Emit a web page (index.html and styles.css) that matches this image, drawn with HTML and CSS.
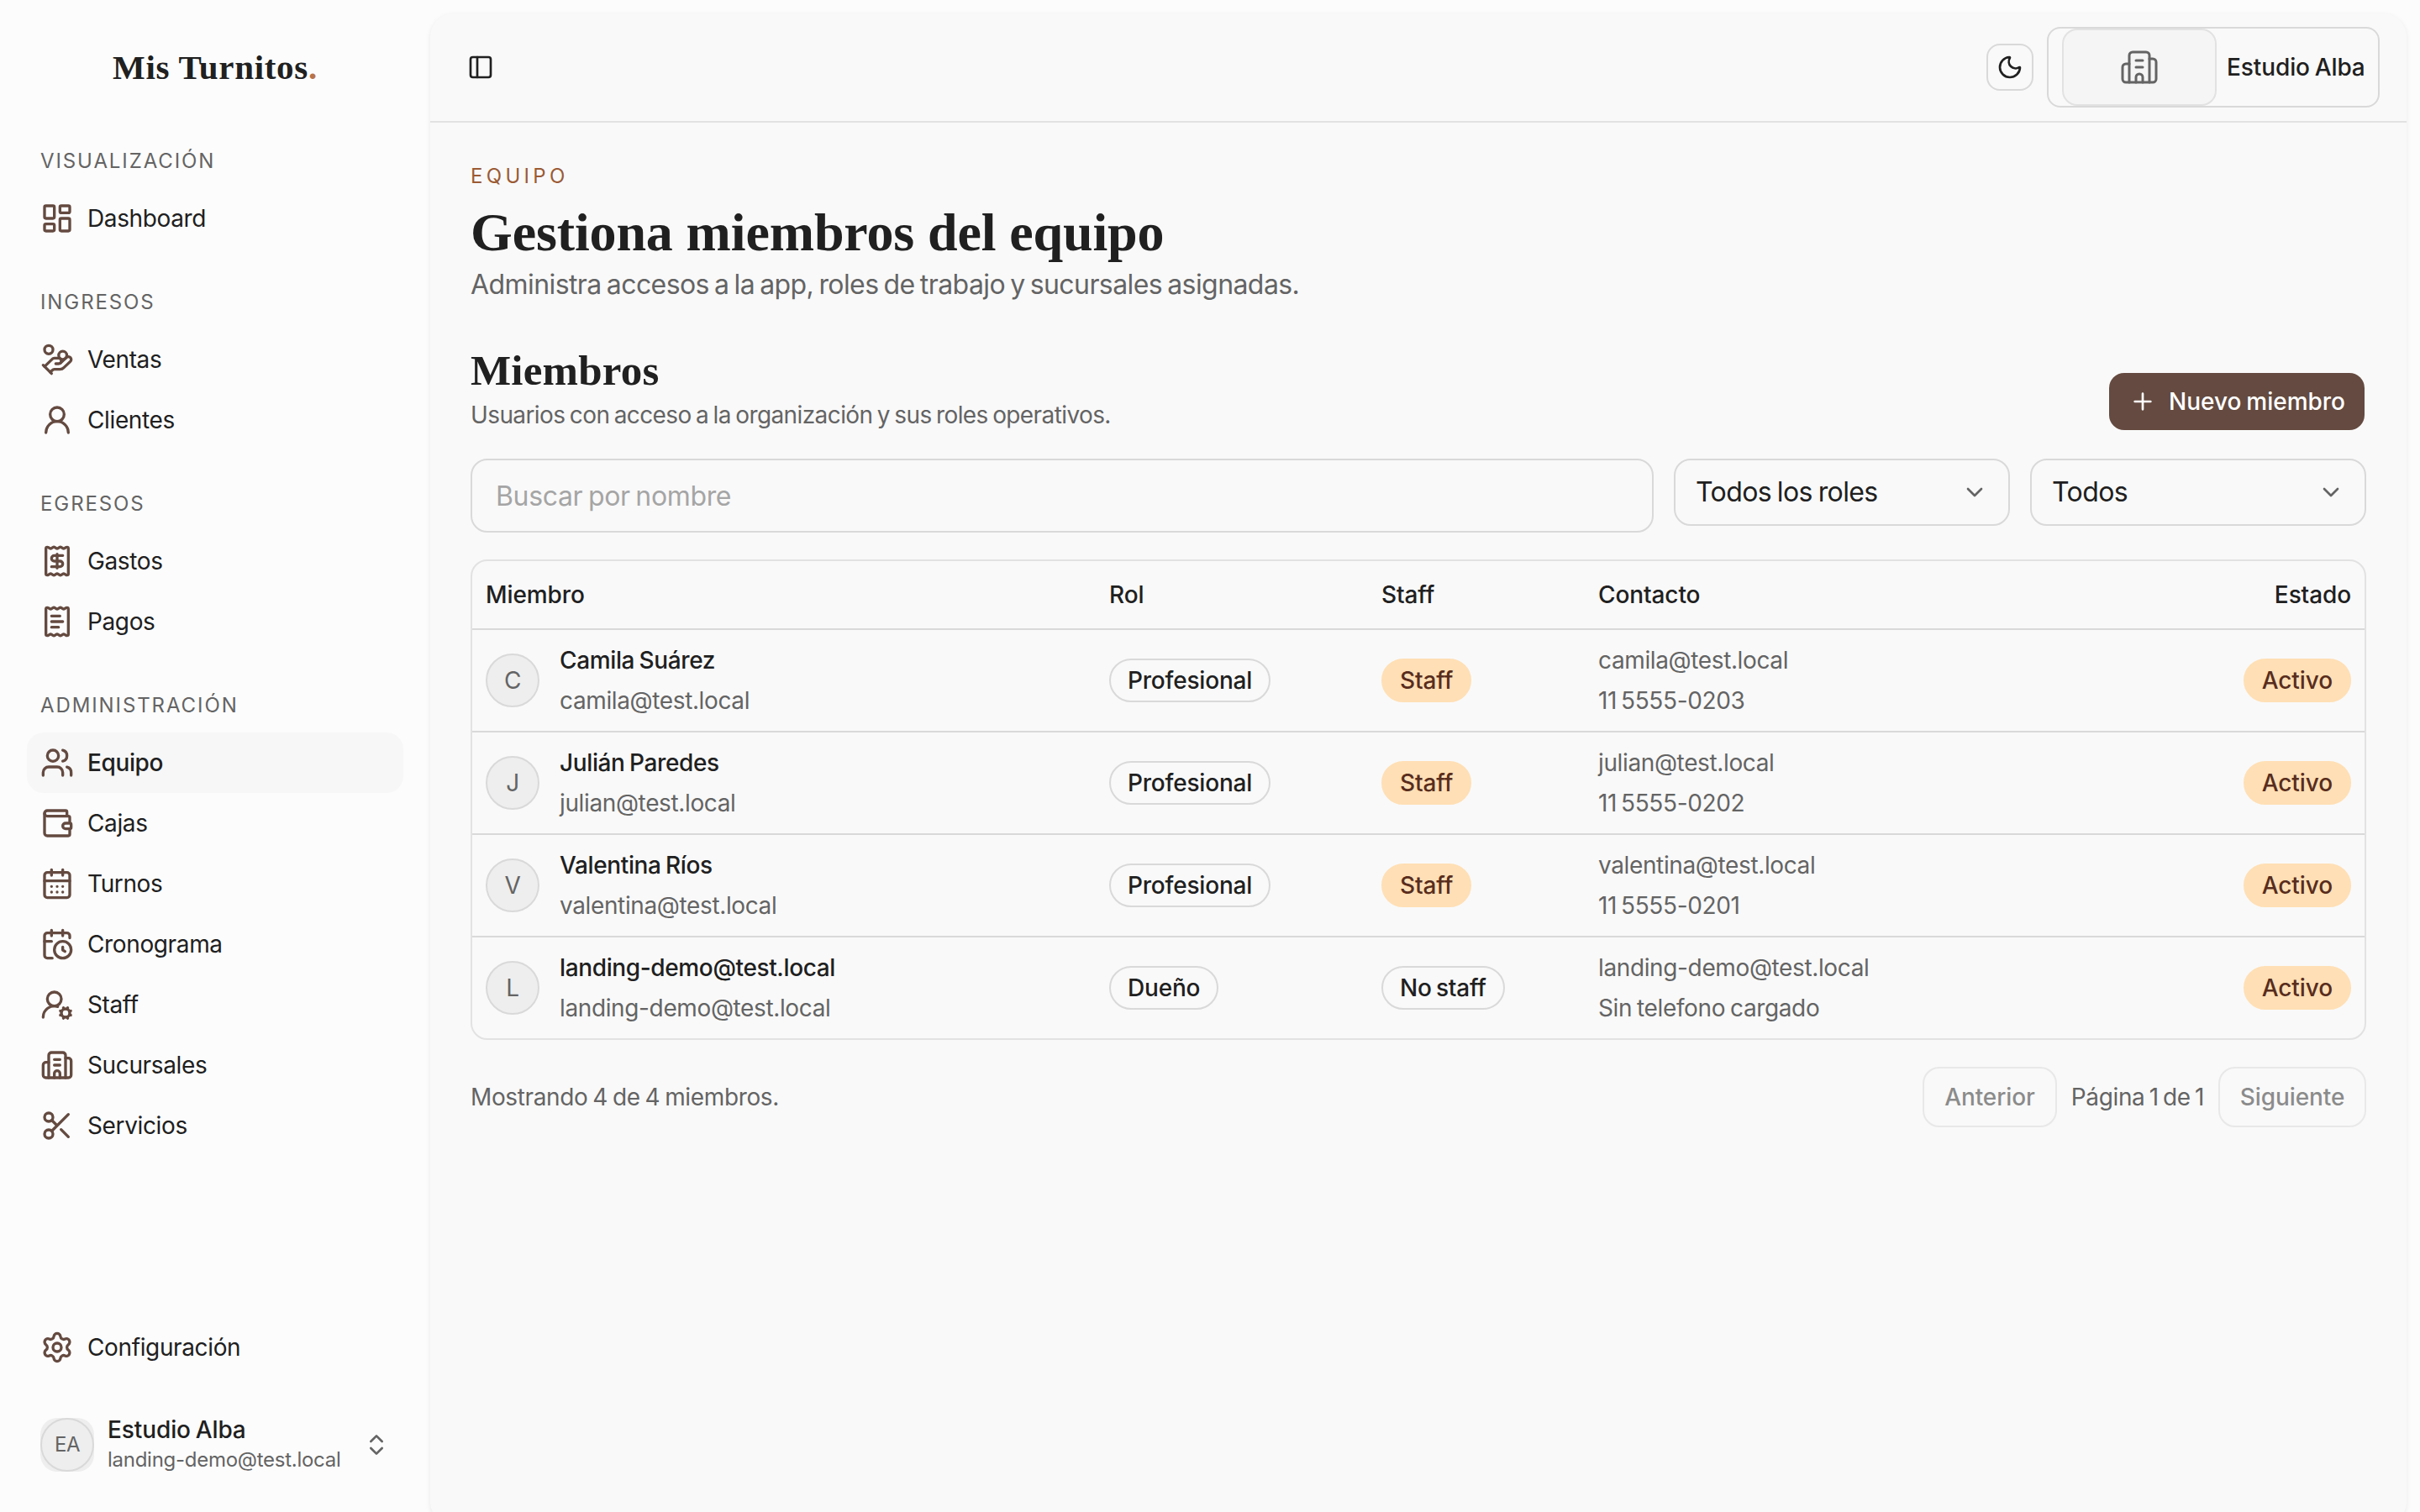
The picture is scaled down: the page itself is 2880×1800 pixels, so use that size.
FILE: index.html
```html
<!DOCTYPE html>
<html lang="es">
<head>
    <meta charset="UTF-8">
    <meta name="viewport" content="width=device-width, initial-scale=1.0">
    <title>Equipo - Mis Turnitos</title>
    <link rel="stylesheet" href="styles.css">
</head>
<body>
    <!-- Iconos -->
    <svg class="sprite" aria-hidden="true">
        <symbol id="i-dashboard" viewBox="0 0 24 24"><rect width="7" height="9" x="3" y="3" rx="1"/><rect width="7" height="5" x="14" y="3" rx="1"/><rect width="7" height="9" x="14" y="12" rx="1"/><rect width="7" height="5" x="3" y="16" rx="1"/></symbol>
        <symbol id="i-coins" viewBox="0 0 24 24"><path d="M11 15h2a2 2 0 1 0 0-4h-3c-.6 0-1.1.2-1.4.6L3 17"/><path d="m7 21 1.6-1.4c.3-.4.8-.6 1.4-.6h4c1.1 0 2.1-.4 2.8-1.2l4.6-4.4a2 2 0 0 0-2.75-2.91l-4.2 3.9"/><path d="m2 16 6 6"/><circle cx="16" cy="9" r="2.9"/><circle cx="6" cy="5" r="3"/></symbol>
        <symbol id="i-user" viewBox="0 0 24 24"><circle cx="12" cy="8" r="5"/><path d="M20 21a8 8 0 0 0-16 0"/></symbol>
        <symbol id="i-receipt" viewBox="0 0 24 24"><path d="M4 3a1 1 0 0 1 1-1 1.3 1.3 0 0 1 .7.2l.933.6a1.3 1.3 0 0 0 1.4 0l.934-.6a1.3 1.3 0 0 1 1.4 0l.933.6a1.3 1.3 0 0 0 1.4 0l.933-.6a1.3 1.3 0 0 1 1.4 0l.934.6a1.3 1.3 0 0 0 1.4 0l.933-.6A1.3 1.3 0 0 1 19 2a1 1 0 0 1 1 1v18a1 1 0 0 1-1 1 1.3 1.3 0 0 1-.7-.2l-.933-.6a1.3 1.3 0 0 0-1.4 0l-.934.6a1.3 1.3 0 0 1-1.4 0l-.933-.6a1.3 1.3 0 0 0-1.4 0l-.933.6a1.3 1.3 0 0 1-1.4 0l-.934-.6a1.3 1.3 0 0 0-1.4 0l-.933.6a1.3 1.3 0 0 1-.7.2 1 1 0 0 1-1-1z"/></symbol>
        <symbol id="i-users" viewBox="0 0 24 24"><path d="M16 21v-2a4 4 0 0 0-4-4H6a4 4 0 0 0-4 4v2"/><path d="M16 3.128a4 4 0 0 1 0 7.744"/><path d="M22 21v-2a4 4 0 0 0-3-3.87"/><circle cx="9" cy="7" r="4"/></symbol>
        <symbol id="i-wallet" viewBox="0 0 24 24"><path d="M19 7V4a1 1 0 0 0-1-1H5a2 2 0 0 0 0 4h15a1 1 0 0 1 1 1v4h-3a2 2 0 0 0 0 4h3a1 1 0 0 0 1-1v-2a1 1 0 0 0-1-1"/><path d="M3 5v14a2 2 0 0 0 2 2h15a1 1 0 0 0 1-1v-4"/></symbol>
        <symbol id="i-calendar" viewBox="0 0 24 24"><path d="M8 2v4M16 2v4"/><rect width="18" height="18" x="3" y="4" rx="2"/><path d="M3 10h18M8 14h.01M12 14h.01M16 14h.01M8 18h.01M12 18h.01M16 18h.01"/></symbol>
        <symbol id="i-schedule" viewBox="0 0 24 24"><path d="M16 14v2.2l1.6 1"/><path d="M16 2v4M8 2v4M3 10h5"/><path d="M21 7.5V6a2 2 0 0 0-2-2H5a2 2 0 0 0-2 2v14a2 2 0 0 0 2 2h3.5"/><circle cx="16" cy="16" r="6"/></symbol>
        <symbol id="i-user-cog" viewBox="0 0 24 24"><path d="m14.305 19.53.923-.382m0-2.296-.923-.383m2.547-1.241-.383-.923m.383 6.467-.383.924m2.679-6.468.383-.923m-.001 7.391-.382-.924m1.624-3.92.924-.383m-.924 2.679.924.383"/><path d="M2 21a8 8 0 0 1 10.434-7.62"/><circle cx="10" cy="8" r="5"/><circle cx="18" cy="18" r="3"/></symbol>
        <symbol id="i-building" viewBox="0 0 24 24"><path d="M10 12h4M10 8h4"/><path d="M14 21v-3a2 2 0 0 0-4 0v3"/><path d="M6 10H4a2 2 0 0 0-2 2v7a2 2 0 0 0 2 2h16a2 2 0 0 0 2-2V9a2 2 0 0 0-2-2h-2"/><path d="M6 21V5a2 2 0 0 1 2-2h8a2 2 0 0 1 2 2v16"/></symbol>
        <symbol id="i-scissors" viewBox="0 0 24 24"><circle cx="6" cy="6" r="3"/><path d="M8.12 8.12 12 12M20 4 8.12 15.88"/><circle cx="6" cy="18" r="3"/><path d="M14.8 14.8 20 20"/></symbol>
        <symbol id="i-settings" viewBox="0 0 24 24"><path d="M9.671 4.136a2.34 2.34 0 0 1 4.659 0 2.34 2.34 0 0 0 3.319 1.915 2.34 2.34 0 0 1 2.33 4.033 2.34 2.34 0 0 0 0 3.831 2.34 2.34 0 0 1-2.33 4.033 2.34 2.34 0 0 0-3.319 1.915 2.34 2.34 0 0 1-4.659 0 2.34 2.34 0 0 0-3.32-1.915 2.34 2.34 0 0 1-2.33-4.033 2.34 2.34 0 0 0 0-3.831A2.34 2.34 0 0 1 6.35 6.051a2.34 2.34 0 0 0 3.319-1.915"/><circle cx="12" cy="12" r="3"/></symbol>
        <symbol id="i-chevron" viewBox="0 0 24 24"><path d="m6 9 6 6 6-6"/></symbol>
    </svg>

    <div class="app">
        <aside class="sidebar">
            <div class="brand">Mis Turnitos<span class="brand-dot">.</span></div>

            <nav class="nav">
                <div class="nav-group">
                    <div class="nav-label">VISUALIZACIÓN</div>
                    <a class="nav-item"><svg class="icon"><use href="#i-dashboard"/></svg><span>Dashboard</span></a>
                </div>
                <div class="nav-group">
                    <div class="nav-label">INGRESOS</div>
                    <a class="nav-item"><svg class="icon"><use href="#i-coins"/></svg><span>Ventas</span></a>
                    <a class="nav-item"><svg class="icon"><use href="#i-user"/></svg><span>Clientes</span></a>
                </div>
                <div class="nav-group">
                    <div class="nav-label">EGRESOS</div>
                    <a class="nav-item"><svg class="icon" viewBox="0 0 24 24"><use href="#i-receipt"/><path d="M12 17V7M16 8h-6a2 2 0 0 0 0 4h4a2 2 0 0 1 0 4H8"/></svg><span>Gastos</span></a>
                    <a class="nav-item"><svg class="icon" viewBox="0 0 24 24"><use href="#i-receipt"/><path d="M13 16H8M14 8H8M16 12H8"/></svg><span>Pagos</span></a>
                </div>
                <div class="nav-group">
                    <div class="nav-label">ADMINISTRACIÓN</div>
                    <a class="nav-item active"><svg class="icon"><use href="#i-users"/></svg><span>Equipo</span></a>
                    <a class="nav-item"><svg class="icon"><use href="#i-wallet"/></svg><span>Cajas</span></a>
                    <a class="nav-item"><svg class="icon"><use href="#i-calendar"/></svg><span>Turnos</span></a>
                    <a class="nav-item"><svg class="icon"><use href="#i-schedule"/></svg><span>Cronograma</span></a>
                    <a class="nav-item"><svg class="icon"><use href="#i-user-cog"/></svg><span>Staff</span></a>
                    <a class="nav-item"><svg class="icon"><use href="#i-building"/></svg><span>Sucursales</span></a>
                    <a class="nav-item"><svg class="icon"><use href="#i-scissors"/></svg><span>Servicios</span></a>
                </div>
            </nav>

            <div class="sidebar-footer">
                <a class="nav-item"><svg class="icon"><use href="#i-settings"/></svg><span>Configuración</span></a>
                <div class="account">
                    <div class="account-avatar"><div class="avatar avatar-sm">EA</div></div>
                    <div class="account-info">
                        <div class="account-name">Estudio Alba</div>
                        <div class="account-email">landing-demo@test.local</div>
                    </div>
                    <svg class="icon icon-sm" viewBox="0 0 24 24"><path d="m7 15 5 5 5-5M7 9l5-5 5 5"/></svg>
                </div>
            </div>
        </aside>

        <main class="main">
            <header class="topbar">
                <button class="sidebar-trigger" aria-label="Menú"><svg class="icon icon-sm" viewBox="0 0 24 24"><rect width="18" height="18" x="3" y="3" rx="2"/><path d="M9 3v18"/></svg></button>
                <div class="topbar-actions">
                    <button class="theme-toggle" aria-label="Tema"><svg class="icon icon-sm" viewBox="0 0 24 24"><path d="M20.985 12.486a9 9 0 1 1-9.473-9.472c.405-.022.617.46.402.803a6 6 0 0 0 8.268 8.268c.344-.215.825-.004.803.401"/></svg></button>
                    <button class="org">
                        <span class="org-logo"><svg class="icon icon-lg"><use href="#i-building"/></svg></span>
                        <span class="org-name">Estudio Alba</span>
                    </button>
                </div>
            </header>

            <div class="content">
                <div class="eyebrow">EQUIPO</div>
                <h1>Gestiona miembros del equipo</h1>
                <p class="lead">Administra accesos a la app, roles de trabajo y sucursales asignadas.</p>

                <section class="members">
                    <div class="members-head">
                        <div>
                            <h2>Miembros</h2>
                            <p class="members-desc">Usuarios con acceso a la organización y sus roles operativos.</p>
                        </div>
                        <button class="btn-primary"><svg class="icon icon-sm" viewBox="0 0 24 24"><path d="M5 12h14M12 5v14"/></svg><span>Nuevo miembro</span></button>
                    </div>

                    <div class="filters">
                        <input class="search" type="text" placeholder="Buscar por nombre">
                        <button class="select"><span>Todos los roles</span><svg class="icon icon-sm"><use href="#i-chevron"/></svg></button>
                        <button class="select"><span>Todos</span><svg class="icon icon-sm"><use href="#i-chevron"/></svg></button>
                    </div>

                    <div class="table-wrap">
                        <table>
                            <colgroup>
                                <col class="col-member"><col class="col-role"><col class="col-staff"><col class="col-contact"><col>
                            </colgroup>
                            <thead>
                                <tr><th>Miembro</th><th>Rol</th><th>Staff</th><th>Contacto</th><th class="right">Estado</th></tr>
                            </thead>
                            <tbody>
                                <tr>
                                    <td><div class="member"><div class="avatar">C</div><div class="lines"><div class="name">Camila Suárez</div><div>camila@test.local</div></div></div></td>
                                    <td><span class="badge">Profesional</span></td>
                                    <td><span class="badge badge-accent">Staff</span></td>
                                    <td><div class="lines"><div>camila@test.local</div><div class="phone">11 5555-0203</div></div></td>
                                    <td class="right"><span class="badge badge-accent">Activo</span></td>
                                </tr>
                                <tr>
                                    <td><div class="member"><div class="avatar">J</div><div class="lines"><div class="name">Julián Paredes</div><div>julian@test.local</div></div></div></td>
                                    <td><span class="badge">Profesional</span></td>
                                    <td><span class="badge badge-accent">Staff</span></td>
                                    <td><div class="lines"><div>julian@test.local</div><div class="phone">11 5555-0202</div></div></td>
                                    <td class="right"><span class="badge badge-accent">Activo</span></td>
                                </tr>
                                <tr>
                                    <td><div class="member"><div class="avatar">V</div><div class="lines"><div class="name">Valentina Ríos</div><div>valentina@test.local</div></div></div></td>
                                    <td><span class="badge">Profesional</span></td>
                                    <td><span class="badge badge-accent">Staff</span></td>
                                    <td><div class="lines"><div>valentina@test.local</div><div class="phone">11 5555-0201</div></div></td>
                                    <td class="right"><span class="badge badge-accent">Activo</span></td>
                                </tr>
                                <tr>
                                    <td><div class="member"><div class="avatar">L</div><div class="lines"><div class="name">landing-demo@test.local</div><div>landing-demo@test.local</div></div></div></td>
                                    <td><span class="badge">Dueño</span></td>
                                    <td><span class="badge">No staff</span></td>
                                    <td><div class="lines"><div>landing-demo@test.local</div><div>Sin telefono cargado</div></div></td>
                                    <td class="right"><span class="badge badge-accent">Activo</span></td>
                                </tr>
                            </tbody>
                        </table>
                    </div>

                    <div class="pagination">
                        <span class="count">Mostrando 4 de 4 miembros.</span>
                        <div class="pager">
                            <button class="btn-page prev" disabled>Anterior</button>
                            <span class="page">Página 1 de 1</span>
                            <button class="btn-page next" disabled>Siguiente</button>
                        </div>
                    </div>
                </section>
            </div>
        </main>
    </div>
</body>
</html>
```

FILE: styles.css
```css
:root {
    --bg: #fcfcfc;
    --surface: #f9f9f9;
    --text: #202020;
    --muted: #646464;
    --border: #d9d9d9;
    --border-soft: #e2e2e2;
    --brown: #644a40;
    --accent-bg: #ffdfb5;
    --accent-text: #582d1d;
    --font-sans: Inter, "Liberation Sans", sans-serif;
    --font-serif: "Liberation Serif", serif;
}

* {
    margin: 0;
    padding: 0;
    box-sizing: border-box;
}

body {
    height: 1800px;
    overflow: hidden;
    background: var(--bg);
    color: var(--text);
    font-family: var(--font-sans);
    font-size: 28px;
    line-height: 40px;
    letter-spacing: -0.37px;
    word-spacing: -1.6px;
}

button {
    font: inherit;
    letter-spacing: inherit;
    word-spacing: inherit;
    white-space: nowrap;
    color: inherit;
    background: none;
    border: none;
}

.sprite {
    display: none;
}

.icon {
    width: 40px;
    height: 40px;
    flex-shrink: 0;
    fill: none;
    stroke: currentColor;
    stroke-width: 2;
    stroke-linecap: round;
    stroke-linejoin: round;
}

.icon-sm {
    width: 32px;
    height: 32px;
}

.icon-lg {
    width: 48px;
    height: 48px;
    stroke-width: 1.5;
}

.app {
    display: flex;
    height: 1800px;
}

/* Sidebar */
.sidebar {
    width: 512px;
    padding: 0 32px 32px;
    display: flex;
    flex-direction: column;
    flex-shrink: 0;
}

.brand {
    height: 160px;
    line-height: 160px;
    text-align: center;
    font-family: var(--font-serif);
    font-size: 41px;
    font-weight: 700;
    letter-spacing: 0.7px;
    word-spacing: 0;
}

.brand-dot {
    color: #b8734a;
}

.nav {
    flex: 1;
    display: flex;
    flex-direction: column;
    gap: 32px;
}

.nav-label {
    height: 64px;
    padding-left: 16px;
    line-height: 64px;
    font-size: 24px;
    letter-spacing: 1.9px;
    color: var(--muted);
}

.nav-item {
    height: 72px;
    padding: 0 16px;
    display: flex;
    align-items: center;
    gap: 16px;
    border-radius: 20px;
}

.nav-item .icon {
    color: var(--brown);
}

.nav-item.active {
    background: #f7f7f7;
    font-weight: 500;
}

.sidebar-footer {
    display: flex;
    flex-direction: column;
    gap: 32px;
}

.account {
    height: 96px;
    padding: 0 16px;
    display: flex;
    align-items: center;
    gap: 16px;
}

.account .icon {
    color: var(--muted);
}

.account-avatar {
    background: #eee;
    border-radius: 20px;
}

.account-info {
    flex: 1;
    padding-bottom: 3px;
}

.account-name {
    line-height: 38px;
    font-weight: 500;
    letter-spacing: -0.1px;
}

.account-email {
    font-size: 24px;
    line-height: 33px;
    letter-spacing: -0.27px;
    color: var(--muted);
}

.avatar {
    width: 64px;
    height: 64px;
    display: flex;
    align-items: center;
    justify-content: center;
    flex-shrink: 0;
    border: 2px solid var(--border);
    border-radius: 50%;
    background: #eee;
    color: var(--muted);
}

.avatar-sm {
    font-size: 24px;
}

/* Panel principal */
.main {
    width: 2352px;
    height: 1800px;
    margin-top: 16px;
    flex-shrink: 0;
    background: var(--surface);
    border-radius: 28px;
    box-shadow: 0 2px 6px rgba(0, 0, 0, 0.08);
}

.topbar {
    height: 130px;
    padding: 0 32px;
    display: flex;
    align-items: center;
    justify-content: space-between;
    border-bottom: 2px solid var(--border-soft);
}

.sidebar-trigger,
.theme-toggle {
    width: 56px;
    height: 56px;
    display: flex;
    align-items: center;
    justify-content: center;
}

.theme-toggle {
    border: 2px solid var(--border);
    border-radius: 16px;
}

.topbar-actions {
    display: flex;
    align-items: center;
    gap: 16px;
}

.org {
    width: 396px;
    height: 96px;
    padding: 0 16px;
    display: flex;
    align-items: center;
    gap: 12px;
    border: 2px solid var(--border);
    border-radius: 16px;
    font-weight: 500;
    letter-spacing: -0.1px;
}

.org-logo {
    width: 184px;
    height: 92px;
    display: flex;
    align-items: center;
    justify-content: center;
    flex-shrink: 0;
    border: 2px solid var(--border-soft);
    border-radius: 18px;
    background: #f5f5f5;
    color: var(--muted);
}

.content {
    padding: 48px 48px 0;
}

.eyebrow {
    font-size: 24px;
    line-height: 32px;
    letter-spacing: 4.3px;
    color: #9a5a34;
}

h1,
h2 {
    font-family: var(--font-serif);
    font-weight: 700;
    word-spacing: 0;
}

h1 {
    margin-top: 15px;
    font-size: 64px;
    line-height: 72px;
    letter-spacing: -0.13px;
}

.lead {
    margin-top: 2px;
    font-size: 32px;
    line-height: 48px;
    letter-spacing: -0.58px;
    word-spacing: -2.3px;
    color: var(--muted);
}

.members {
    margin-top: 50px;
}

.members-head {
    display: flex;
    align-items: flex-end;
    justify-content: space-between;
}

h2 {
    font-size: 51px;
    line-height: 56px;
    letter-spacing: 0.2px;
}

.members-desc {
    margin-top: 5px;
    letter-spacing: -0.6px;
    word-spacing: -1.9px;
    color: var(--muted);
}

.btn-primary {
    height: 72px;
    width: 308px;
    display: flex;
    align-items: center;
    padding-left: 24px;
    gap: 15px;
    border: 2px solid transparent;
    border-radius: 20px;
    background: var(--brown);
    background-clip: padding-box;
    color: #fff;
    font-weight: 500;
    letter-spacing: 0;
}

.filters {
    display: flex;
    align-items: flex-start;
    gap: 24px;
    margin-top: 32px;
}

.search {
    flex: 1;
    height: 88px;
    padding: 0 28px;
    border: 2px solid var(--border);
    border-radius: 20px;
    background: none;
    font: inherit;
    font-size: 32px;
    letter-spacing: -0.35px;
    word-spacing: -2px;
}

.search::placeholder {
    color: #a5a5a5;
}

.select {
    width: 400px;
    height: 80px;
    padding: 0 24px;
    display: flex;
    align-items: center;
    justify-content: space-between;
    border: 2px solid var(--border);
    border-radius: 20px;
    font-size: 32px;
    letter-spacing: -0.6px;
}

.select .icon {
    color: var(--muted);
}

/* Tabla */
.table-wrap {
    margin-top: 32px;
    border: 2px solid var(--border-soft);
    border-radius: 20px;
    overflow: hidden;
}

table {
    width: 100%;
    table-layout: fixed;
    border-collapse: separate;
    border-spacing: 0;
}

.col-member { width: 742px; }
.col-role { width: 324px; }
.col-staff { width: 258px; }
.col-contact { width: 500px; }

th,
td {
    padding: 0 16px;
    text-align: left;
    vertical-align: middle;
    border-bottom: 2px solid var(--border);
}

th {
    height: 82px;
    font-weight: 500;
    letter-spacing: -0.1px;
}

td {
    height: 122px;
    color: var(--muted);
}

tr:last-child td {
    height: 120px;
    border-bottom: none;
}

/* va después de th/td para ganar la alineación */
th.right,
td.right {
    text-align: right;
}

.member {
    display: flex;
    align-items: center;
    gap: 24px;
}

.lines {
    display: flex;
    flex-direction: column;
    gap: 8px;
}

.name {
    color: var(--text);
    font-weight: 500;
}

.phone {
    word-spacing: -2.5px;
}

.badge {
    display: inline-flex;
    align-items: center;
    height: 52px;
    padding: 0 20px;
    border: 2px solid var(--border);
    border-radius: 26px;
    color: var(--text);
    font-weight: 500;
    letter-spacing: -0.2px;
    word-spacing: -2px;
    vertical-align: middle;
}

.badge-accent {
    border-color: var(--accent-bg);
    background: var(--accent-bg);
    color: var(--accent-text);
    letter-spacing: -0.1px;
}

.pagination {
    display: flex;
    align-items: center;
    justify-content: space-between;
    margin-top: 32px;
    color: var(--muted);
}

.pager {
    display: flex;
    align-items: center;
    gap: 16px;
}

.page {
    width: 160px;
    text-align: center;
    white-space: nowrap;
    word-spacing: -2.2px;
}

.btn-page {
    height: 72px;
    border: 2px solid var(--border);
    border-radius: 20px;
    color: var(--text);
    font-weight: 500;
    letter-spacing: -0.1px;
    opacity: 0.5;
}

.prev { width: 160px; }
.next { width: 176px; }
```
